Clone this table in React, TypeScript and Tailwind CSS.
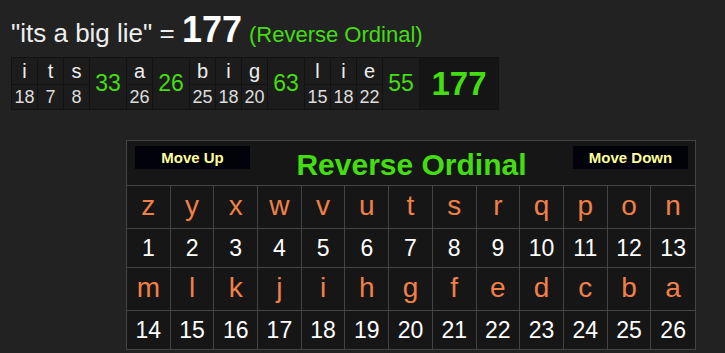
import React from 'react'

const parts: { letters: [string, number][]; sum: number }[] = [
  { letters: [['i', 18], ['t', 7], ['s', 8]], sum: 33 },
  { letters: [['a', 26]], sum: 26 },
  { letters: [['b', 25], ['i', 18], ['g', 20]], sum: 63 },
  { letters: [['l', 15], ['i', 18], ['e', 22]], sum: 55 },
]

const rowA = 'zyxwvutsrqpon'.split('')
const rowB = 'mlkjihgfedcba'.split('')

function Breakdown() {
  return (
    <table className="border-collapse border border-[#121212] bg-[#1c1c1c] text-[20px] leading-none table-fixed">
      <tbody>
        <tr className="h-[27px]">
          {parts.map((p, pi) => (
            <React.Fragment key={pi}>
              {p.letters.map(([l], li) => (
                <td key={li} className="border border-[#121212] w-[26px] p-0 text-center text-[#eeeeee] align-middle">
                  {l}
                </td>
              ))}
              <td rowSpan={2} className="border border-[#121212] w-[37px] p-0 text-center text-[23px] text-[#44dd11]">
                {p.sum}
              </td>
            </React.Fragment>
          ))}
          <td rowSpan={2} className="border border-[#121212] w-[79px] p-0 bg-[#151515] text-center text-[33px] font-bold text-[#44dd11]">
            177
          </td>
        </tr>
        <tr className="h-[25px]">
          {parts.map((p, pi) =>
            p.letters.map(([, n], li) => (
              <td key={`${pi}-${li}`} className="border border-[#121212] p-0 text-center text-[18px] text-[#dddddd]">
                {n}
              </td>
            )),
          )}
        </tr>
      </tbody>
    </table>
  )
}

function CipherTable() {
  return (
    <div className="w-[570px] border border-[#444] bg-[#161616]">
      <div className="h-[45px] flex items-start justify-between pl-[8px] pr-[7px] pt-[5px] border-b border-[#444]">
        <button className="w-[115px] h-[23px] bg-[#02020a] text-[#ffff99] text-[15px] font-bold leading-none">Move Up</button>
        <div className="text-[30px] font-bold text-[#44dd11] leading-none mt-[4px]">Reverse Ordinal</div>
        <button className="w-[115px] h-[23px] bg-[#02020a] text-[#ffff99] text-[15px] font-bold leading-none">Move Down</button>
      </div>
      <div className="grid grid-cols-13">
        {rowA.map((l, i) => (
          <div key={l} className={`h-[43px] flex items-center justify-center pb-[3px] text-[28px] text-[#f08048] border-b border-[#444] ${i < 12 ? 'border-r' : ''}`}>
            {l}
          </div>
        ))}
        {rowA.map((_, i) => (
          <div key={i} className={`h-[39px] flex items-center justify-center text-[23px] text-white border-b border-[#444] ${i < 12 ? 'border-r' : ''}`}>
            {i + 1}
          </div>
        ))}
        {rowB.map((l, i) => (
          <div key={l} className={`h-[43px] flex items-center justify-center pb-[3px] text-[28px] text-[#f08048] border-b border-[#444] ${i < 12 ? 'border-r' : ''}`}>
            {l}
          </div>
        ))}
        {rowB.map((_, i) => (
          <div key={i} className={`h-[38px] flex items-center justify-center text-[23px] text-white border-[#444] ${i < 12 ? 'border-r' : ''}`}>
            {i + 14}
          </div>
        ))}
      </div>
    </div>
  )
}

export default function App() {
  return (
    <div className="w-[725px] h-[353px] bg-[#222222] font-['Liberation_Sans',Arial,sans-serif] overflow-hidden">
      <div className="pl-[11px] pt-[12px] h-[48px] flex items-baseline leading-none text-[#eeeeee] text-[26px]">
        <span>"its a big lie" =&nbsp;</span>
        <span className="text-[36px] font-bold text-white">177</span>
        <span className="ml-[7px] text-[22px] text-[#44dd11]">(Reverse Ordinal)</span>
      </div>
      <div className="pl-[11px] pt-[9px]">
        <Breakdown />
      </div>
      <div className="pl-[126px] pt-[30px]">
        <CipherTable />
      </div>
    </div>
  )
}
